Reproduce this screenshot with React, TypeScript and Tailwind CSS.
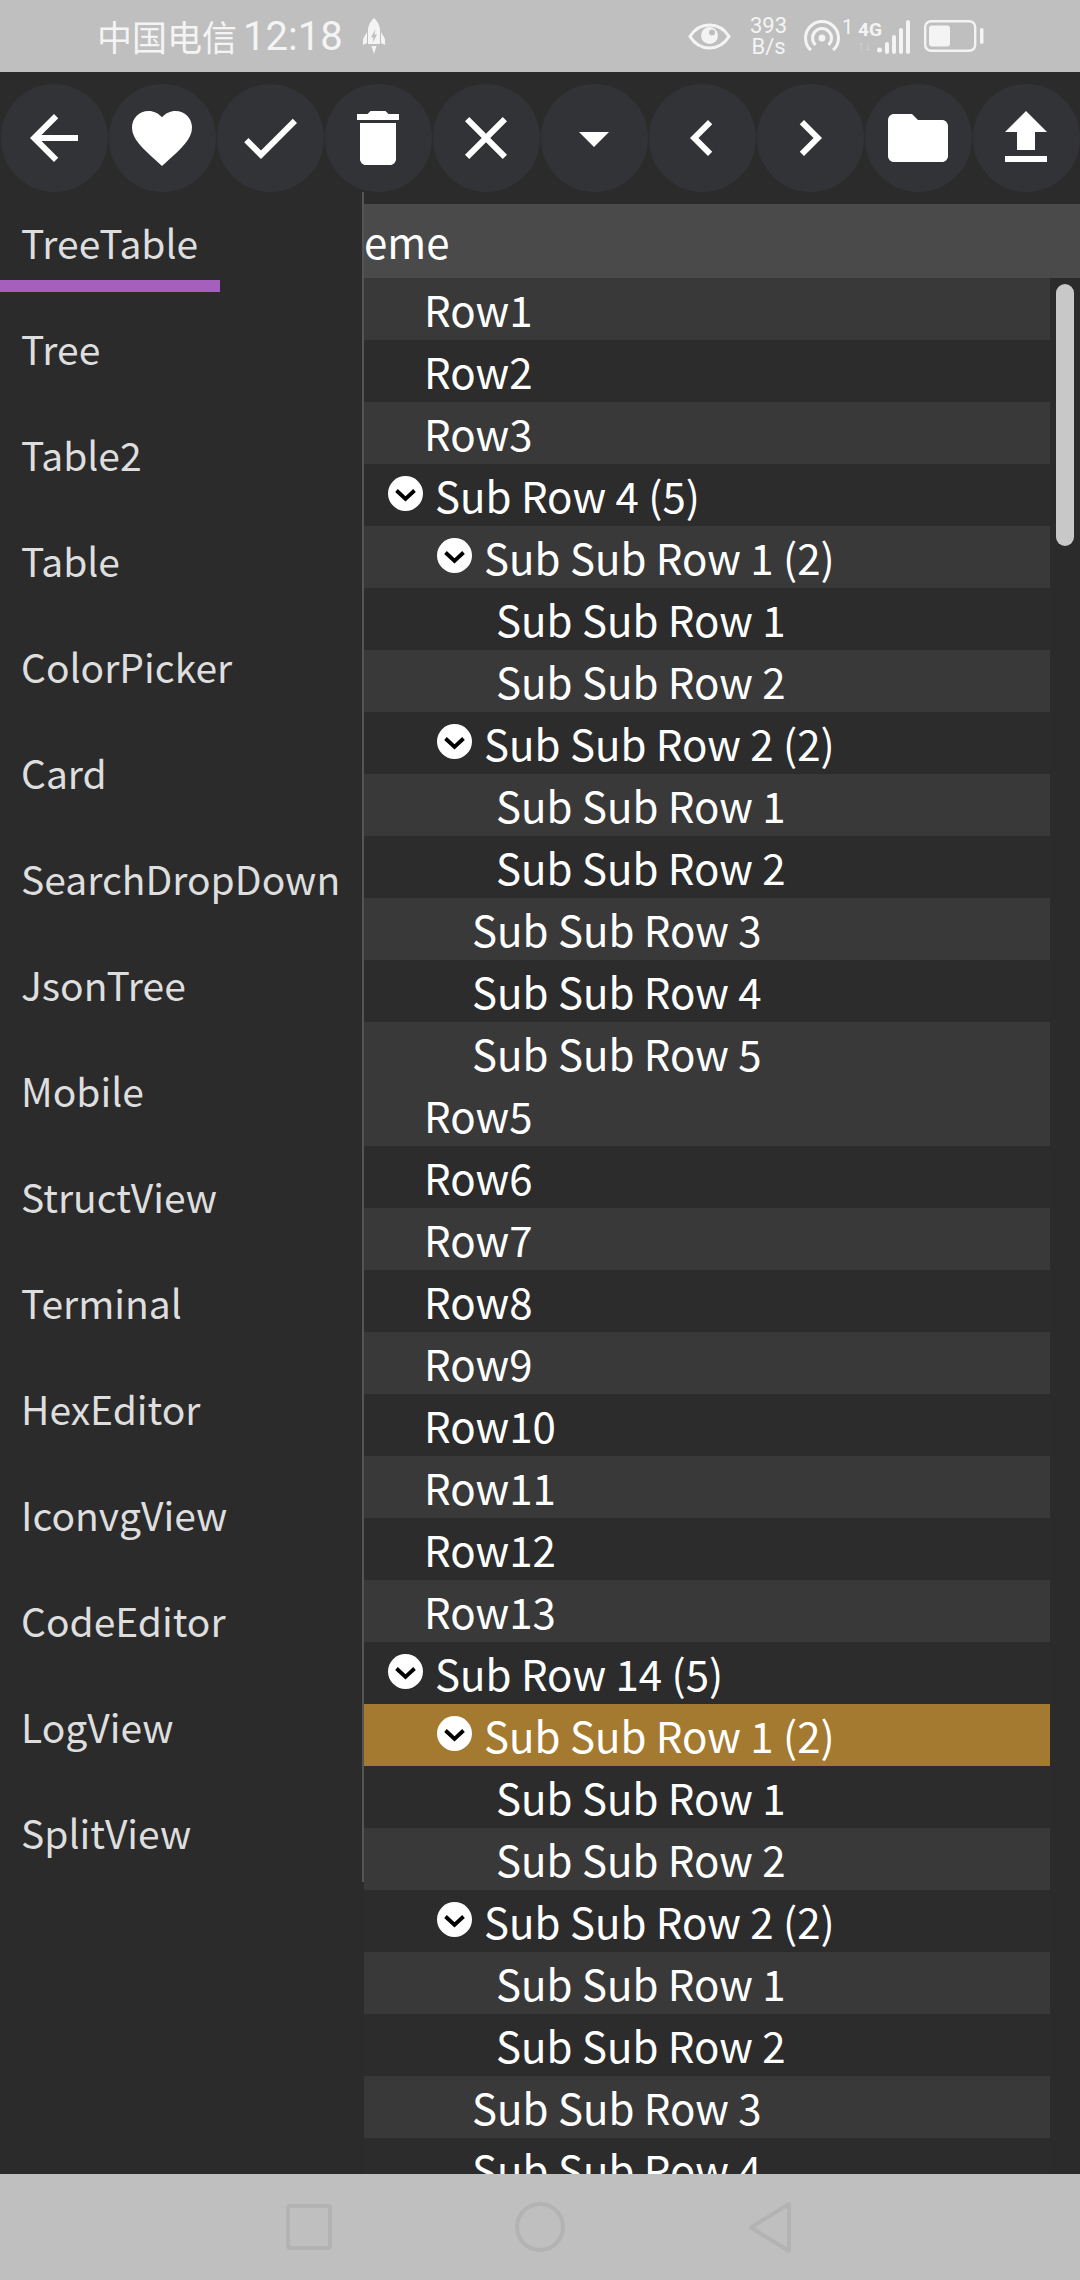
const font = { fontFamily: '"Noto Sans CJK SC", sans-serif' };
const roboto = { fontFamily: 'Roboto, sans-serif' };

const toolbarIcons = [
  'M20 11H7.83l5.59-5.59L12 4l-8 8 8 8 1.41-1.41L7.83 13H20v-2z',
  'M12 21.35l-1.45-1.32C5.4 15.36 2 12.28 2 8.5 2 5.42 4.42 3 7.5 3c1.74 0 3.41.81 4.5 2.09C13.09 3.81 14.76 3 16.5 3 19.58 3 22 5.42 22 8.5c0 3.78-3.4 6.86-8.55 11.54L12 21.35z',
  'M9 16.17L4.83 12l-1.42 1.41L9 19 21 7l-1.41-1.41z',
  'M6 19c0 1.1.9 2 2 2h8c1.1 0 2-.9 2-2V7H6v12zM19 4h-3.5l-1-1h-5l-1 1H5v2h14V4z',
  'M19 6.41L17.59 5 12 10.59 6.41 5 5 6.41 10.59 12 5 17.59 6.41 19 12 13.41 17.59 19 19 17.59 13.41 12z',
  'M7 10l5 5 5-5z',
  'M15.41 7.41L14 6l-6 6 6 6 1.41-1.41L10.83 12z',
  'M10 6L8.59 7.41 13.17 12l-4.58 4.59L10 18l6-6z',
  'M10 4H4c-1.1 0-1.99.9-1.99 2L2 18c0 1.1.9 2 2 2h16c1.1 0 2-.9 2-2V8c0-1.1-.9-2-2-2h-8l-2-2z',
  'M9 16h6v-6h4l-7-7-7 7h4zm-4 2h14v2H5z',
];

const tabs = [
  'TreeTable', 'Tree', 'Table2', 'Table', 'ColorPicker', 'Card', 'SearchDropDown', 'JsonTree',
  'Mobile', 'StructView', 'Terminal', 'HexEditor', 'IconvgView', 'CodeEditor', 'LogView', 'SplitView',
];

type Row = { label: string; kind: 'leaf0' | 'leaf1' | 'leaf2' | 'branch0' | 'branch1'; active?: boolean };

const group = (n: number, active: boolean): Row[] => [
  { label: `Sub Row ${n} (5)`, kind: 'branch0' },
  { label: 'Sub Sub Row 1 (2)', kind: 'branch1', active },
  { label: 'Sub Sub Row 1', kind: 'leaf2' },
  { label: 'Sub Sub Row 2', kind: 'leaf2' },
  { label: 'Sub Sub Row 2 (2)', kind: 'branch1' },
  { label: 'Sub Sub Row 1', kind: 'leaf2' },
  { label: 'Sub Sub Row 2', kind: 'leaf2' },
  { label: 'Sub Sub Row 3', kind: 'leaf1' },
  { label: 'Sub Sub Row 4', kind: 'leaf1' },
  { label: 'Sub Sub Row 5', kind: 'leaf1' },
];

const leaves = (a: number, b: number): Row[] => {
  const out: Row[] = [];
  for (let i = a; i <= b; i++) out.push({ label: `Row${i}`, kind: 'leaf0' });
  return out;
};

// stripes restart in every group, so Sub Sub Row 5 and Row5 are both light
const striped = (list: Row[], first: number) => list.map((r, i) => ({ ...r, light: (first + i) % 2 === 1 }));

const rows = [
  ...striped(leaves(1, 3), 1),
  ...striped(group(4, false), 0),
  ...striped(leaves(5, 13), 5),
  ...striped(group(14, true), 0),
];

const indent = {
  leaf0: 'pl-[60px]',
  leaf1: 'pl-[108px]',
  leaf2: 'pl-[132px]',
  branch0: 'pl-[24px]',
  branch1: 'pl-[73px]',
};

function ExpandIcon() {
  return (
    <svg width="35" height="35" viewBox="0 0 35 35" className="mr-[12px] mb-[3px] shrink-0">
      <circle cx="17.5" cy="17.5" r="17.5" fill="#fff" />
      <path d="M8.5 14.5L17.5 23L26.5 14.5" fill="none" stroke="#000" strokeWidth="3.8" />
    </svg>
  );
}

function StatusBar() {
  return (
    <div className="h-[72px] shrink-0 bg-[#bfbfbf] flex items-center text-[#f4f4f4] pl-[97px]">
      <span className="text-[35px] leading-none w-[146px] mb-[2px]" style={font}>中国电信</span>
      <span className="text-[40px] leading-none w-[120px] mt-[1px]" style={roboto}>12:18</span>
      <svg width="22" height="36" viewBox="0 0 22 36" fill="#f4f4f4">
        <path d="M11 0C7.500 3 5.500 7 5 11V26H17V11C16.500 7 14.500 3 11 0Z" />
        <path d="M4 14L0 21V27L4 25ZM18 14L22 21V27L18 25Z" />
        <path d="M8.500 28H13.500L11 36Z" />
        <path d="M12.500 11L8 19.500H10.500L9.500 25L14 16.500H11.500Z" fill="#bfbfbf" />
      </svg>
      <svg width="43" height="27" viewBox="0 0 43 27" className="ml-[303px]" fill="none">
        <path d="M2 13.500C7 5.500 14 2 21.500 2S36 5.500 41 13.500C36 21.500 29 25 21.500 25S7 21.500 2 13.500Z" stroke="#f4f4f4" strokeWidth="3.200" />
        <circle cx="21.500" cy="12.500" r="8.500" fill="#f4f4f4" />
        <circle cx="24" cy="9.500" r="3" fill="#bfbfbf" />
      </svg>
      <div className="ml-[18px] w-[39px] flex flex-col items-center gap-[1px]" style={roboto}>
        <span className="text-[22px] leading-[20px]">393</span>
        <span className="text-[22px] leading-[20px]">B/s</span>
      </div>
      <svg width="36" height="32" viewBox="0 0 36 32" fill="none" stroke="#f4f4f4" strokeWidth="3" className="ml-[16px]">
        <path d="M7 30C3 27 1.500 22 1.500 18C1.500 9 9 1.500 18 1.500S34.500 9 34.500 18C34.500 22 33 27 29 30" />
        <path d="M11.500 25C9.500 23 8.500 20.500 8.500 18C8.500 13 13 8.500 18 8.500S27.500 13 27.500 18C27.500 20.500 26.500 23 24.500 25" />
        <circle cx="18" cy="18" r="3.500" fill="#f4f4f4" stroke="none" />
      </svg>
      <span className="text-[20px] leading-none ml-[2px] mb-[18px] w-[16px]" style={roboto}>1</span>
      <div className="w-[19px] flex flex-col">
        <span className="text-[19px] leading-[19px] font-bold" style={roboto}>4G</span>
        <span className="text-[13px] leading-[13px] opacity-40 font-bold" style={roboto}>↑↓</span>
      </div>
      <svg width="34" height="34" viewBox="0 0 34 34" fill="#f4f4f4" className="mt-[2px]">
        <circle cx="2.500" cy="30" r="2.500" />
        <rect x="8" y="22" width="4" height="12" rx="2" />
        <rect x="15" y="15" width="4" height="19" rx="2" />
        <rect x="22" y="8" width="4" height="26" rx="2" />
        <rect x="29" y="0" width="4" height="34" rx="2" />
      </svg>
      <svg width="60" height="32" viewBox="0 0 60 32" fill="none" className="ml-[13px]">
        <rect x="1.200" y="1.200" width="50" height="29.600" rx="6" stroke="#f4f4f4" strokeWidth="2.400" />
        <rect x="5" y="5.500" width="21" height="21" rx="3" fill="#f4f4f4" />
        <rect x="56" y="8" width="3.500" height="16" rx="1.700" fill="#f4f4f4" />
      </svg>
    </div>
  );
}

function NavBar() {
  return (
    <div className="h-[106px] shrink-0 bg-[#bfbfbf] flex items-start pt-[28px] pl-[286px]">
      <svg width="46" height="50" viewBox="0 0 46 50" fill="none" stroke="#b3b3b3" strokeWidth="4">
        <rect x="2" y="4" width="42" height="42" rx="2" />
      </svg>
      <svg width="52" height="50" viewBox="0 0 52 50" fill="none" stroke="#b3b3b3" strokeWidth="4" className="ml-[182px]">
        <circle cx="26" cy="25" r="23" />
      </svg>
      <svg width="44" height="52" viewBox="0 0 44 52" fill="none" stroke="#b3b3b3" strokeWidth="4" strokeLinejoin="round" className="ml-[182px]">
        <path d="M41 2V49L3 25.500Z" />
      </svg>
    </div>
  );
}

export default function App() {
  return (
    <div className="w-[1080px] h-[2280px] flex flex-col overflow-hidden bg-[#2b2b2b]" style={font}>
      <StatusBar />

      <div className="h-[120px] shrink-0 flex pt-[12px]">
        {toolbarIcons.map((d, i) => (
          <div key={i} className="w-[108px] h-[108px] flex items-center justify-center">
            <div className="w-[107px] h-[108px] rounded-full bg-[#323336] flex items-center justify-center">
              <svg width="72" height="72" viewBox="0 0 24 24" fill="#fff">
                <path d={d} />
              </svg>
            </div>
          </div>
        ))}
      </div>

      <div className="flex-1 min-h-0 flex">
        <div className="w-[364px] h-[1690px] shrink-0 border-r-2 border-[#555555] pt-[12px]">
          {tabs.map((t, i) => (
            <div key={t} className="h-[106px] flex flex-col">
              <div className="h-[76px] pl-[21px] flex items-center text-[39px] leading-none text-[#dedede]">{t}</div>
              {i === 0 && <div className="w-[220px] h-[12px] bg-[#a55fbc]" />}
            </div>
          ))}
        </div>

        <div className="flex-1 min-w-0 pt-[12px] flex flex-col">
          <div className="h-[74px] shrink-0 bg-[#4a4a4a] flex items-center text-[42px] leading-none text-white">eme</div>
          <div className="flex-1 min-h-0 flex overflow-hidden">
            <div className="w-[686px] shrink-0">
              {rows.map((r, i) => {
                const bg = r.active ? 'bg-[#a37a2f]' : r.light ? 'bg-[#393939]' : 'bg-[#2c2c2c]';
                return (
                  <div key={i} className={`h-[62px] flex items-center text-[42px] leading-none text-white ${bg} ${indent[r.kind]}`}>
                    {r.kind.startsWith('branch') && <ExpandIcon />}
                    <span>{r.label}</span>
                  </div>
                );
              })}
            </div>
            <div className="flex-1 pt-[6px] pl-[6px]">
              <div className="w-[18px] h-[262px] rounded-full bg-[#c8c8c8]" />
            </div>
          </div>
        </div>
      </div>

      <NavBar />
    </div>
  );
}
